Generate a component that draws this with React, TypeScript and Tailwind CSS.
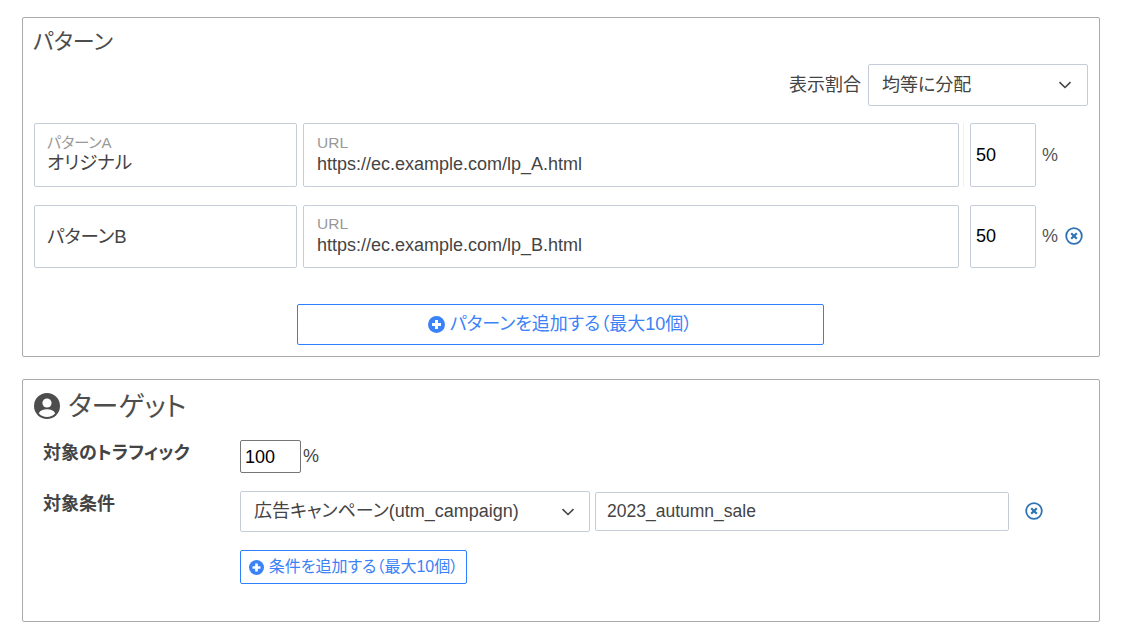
function PlusCircle({ className }: { className: string }) {
  return (
    <svg viewBox="0 0 16 16" className={className}>
      <circle cx="8" cy="8" r="8" fill="currentColor" />
      <path d="M8 3.800v8.400M3.800 8h8.400" stroke="#fff" strokeWidth="2.800" fill="none" />
    </svg>
  );
}

function RemoveIcon({ className }: { className: string }) {
  return (
    <svg viewBox="0 0 18 18" className={className} fill="none">
      <circle cx="9" cy="9" r="7.800" stroke="#2f73b5" strokeWidth="1.800" />
      <path d="M6.200 6.200l5.600 5.600M11.800 6.200l-5.600 5.600" stroke="#2f73b5" strokeWidth="2.200" />
    </svg>
  );
}

function Chevron() {
  return (
    <svg viewBox="0 0 14 8" className="h-2 w-3.5" fill="none">
      <path d="M1.500 1.200L7 6.500l5.500-5.300" stroke="#444" strokeWidth="1.600" />
    </svg>
  );
}

function UserCircle() {
  return (
    <svg viewBox="0 0 26 26" className="h-[26px] w-[26px]">
      <circle cx="13" cy="13" r="13" fill="#4d4d4d" />
      <circle cx="13" cy="10" r="4.600" fill="#fff" />
      <path d="M4.800 20.200c1.600-3 4.200-4 8.200-4s6.600 1 8.200 4a10.600 10.600 0 0 1-16.400 0z" fill="#fff" />
    </svg>
  );
}

function PatternRow({
  label,
  name,
  url,
  removable,
  height,
}: {
  label?: string;
  name: string;
  url: string;
  removable?: boolean;
  height: string;
}) {
  return (
    <div className={`flex items-stretch ${height}`}>
      <div className="flex w-[263px] flex-col justify-center rounded-[2px] border border-[#c5ced8] pl-[12px] pt-[1px] text-[#444]">
        {label && <div className="text-[15px] leading-[15px] text-[#999]">{label}</div>}
        <div className="text-[18.500px] leading-[26px]">{name}</div>
      </div>
      <div className="ml-[6px] flex w-[656px] flex-col justify-center rounded-[2px] border border-[#c5ced8] pl-[13px] pt-[1px]">
        <div className="text-[15.500px] leading-[15px] text-[#999]">URL</div>
        <div className="pt-[1px] text-[18px] leading-[26px] text-[#444]">{url}</div>
      </div>
      {/* faint divider only on the first row */}
      <div className={`ml-[4px] w-px ${label ? "bg-[#eef1f5]" : "bg-transparent"}`} />
      <div className="ml-[6px] flex w-[66px] items-center rounded-[2px] border border-[#c5ced8] pl-[5px] text-[18px] text-black">
        50
      </div>
      <span className="ml-[6px] self-center text-[18px] text-[#555]">%</span>
      {removable && <RemoveIcon className="mb-[2px] ml-[7px] h-[18px] w-[18px] self-center" />}
    </div>
  );
}

export default function App() {
  return (
    <div className="h-[638px] w-[1125px] overflow-hidden bg-white pl-[22px] pt-[17px] font-['Liberation_Sans','Noto_Sans_CJK_JP',sans-serif] text-[#444] [font-feature-settings:'palt']">
      <section className="h-[340px] w-[1078px] rounded-[2px] border border-[#aaa] pl-[11px] pr-[11px]">
        <h2 className="-ml-[1px] pt-[9px] text-[22px] leading-[30px] text-[#4d4d4d]">パターン</h2>
        <div className="mt-[7px] flex items-center justify-end">
          <span className="mr-[7px] text-[18px]">表示割合</span>
          <div className="flex h-[42px] w-[220px] items-center justify-between rounded-[2px] border border-[#c5ced8] pl-[13px] pr-[15px] text-[18px]">
            均等に分配
            <Chevron />
          </div>
        </div>
        <div className="mt-[17px] flex flex-col gap-[18px]">
          <PatternRow height="h-[64px]" label="パターンA" name="オリジナル" url="https://ec.example.com/lp_A.html" />
          <PatternRow height="h-[63px]" name="パターンB" url="https://ec.example.com/lp_B.html" removable />
        </div>
        <div className="mt-[36px] flex justify-center pr-[2px]">
          <button className="flex h-[41px] w-[527px] items-center justify-center gap-[5px] rounded-[2px] border border-[#2f80ff] text-[18px] text-[#3b82f6]">
            <PlusCircle className="h-[17px] w-[17px]" />
            パターンを追加する（最大10個）
          </button>
        </div>
      </section>

      <section className="mt-[22px] h-[243px] w-[1078px] rounded-[2px] border border-[#aaa] pl-[11px]">
        <div className="flex items-center gap-[8px] pt-[12px]">
          <UserCircle />
          <h2 className="pt-[2px] text-[27px] leading-[26px] text-[#4d4d4d]">ターゲット</h2>
        </div>
        <div className="mt-[20px] flex">
          <div className="ml-[9px] w-[197px] pt-[2px] text-[18px] font-bold leading-[22px]">対象のトラフィック</div>
          <div className="flex items-center">
            <div className="flex h-[33px] w-[61px] items-center rounded-[2px] border border-[#767676] pl-[4px] pt-[1px] text-[18px] text-black">
              100
            </div>
            <span className="ml-[2px] text-[18px]">%</span>
          </div>
        </div>
        <div className="mt-[18px] flex">
          <div className="ml-[9px] w-[197px] pt-[2px] text-[18px] font-bold leading-[22px]">対象条件</div>
          <div>
            <div className="flex items-center">
              <div className="flex h-[41px] w-[350px] items-center justify-between rounded-[2px] border border-[#c5ced8] pl-[13px] pr-[14px] text-[18px]">
                広告キャンペーン(utm_campaign)
                <Chevron />
              </div>
              <div className="ml-[5px] flex h-[39px] w-[414px] items-center rounded-[2px] border border-[#c5ced8] pl-[11px] text-[17.500px]">
                2023_autumn_sale
              </div>
              <RemoveIcon className="mb-[2px] ml-[16px] h-[18px] w-[18px]" />
            </div>
            <button className="mt-[18px] flex h-[34px] w-[227px] items-center justify-center gap-[5px] rounded-[2px] border border-[#2f80ff] text-[16px] text-[#3b82f6]">
              <PlusCircle className="h-[15px] w-[15px]" />
              条件を追加する（最大10個）
            </button>
          </div>
        </div>
      </section>
    </div>
  );
}
